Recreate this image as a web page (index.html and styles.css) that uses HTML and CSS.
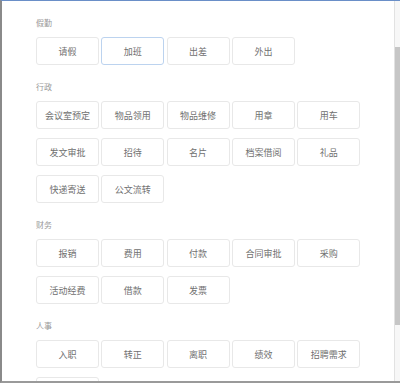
FILE: index.html
```html
<!DOCTYPE html>
<html lang="zh-CN">
<head>
    <meta charset="UTF-8">
    <meta name="viewport" content="width=device-width, initial-scale=1.0">
    <title>审批</title>
    <link rel="stylesheet" href="styles.css">
</head>
<body>
    <div class="frame">
        <div class="content">
            <div class="section">
                <div class="section-title">假勤</div>
                <div class="grid">
                    <div class="item">请假</div>
                    <div class="item active">加班</div>
                    <div class="item">出差</div>
                    <div class="item">外出</div>
                </div>
            </div>

            <div class="section">
                <div class="section-title">行政</div>
                <div class="grid">
                    <div class="item">会议室预定</div>
                    <div class="item">物品领用</div>
                    <div class="item">物品维修</div>
                    <div class="item">用章</div>
                    <div class="item">用车</div>
                    <div class="item">发文审批</div>
                    <div class="item">招待</div>
                    <div class="item">名片</div>
                    <div class="item">档案借阅</div>
                    <div class="item">礼品</div>
                    <div class="item">快递寄送</div>
                    <div class="item">公文流转</div>
                </div>
            </div>

            <div class="section">
                <div class="section-title">财务</div>
                <div class="grid">
                    <div class="item">报销</div>
                    <div class="item">费用</div>
                    <div class="item">付款</div>
                    <div class="item">合同审批</div>
                    <div class="item">采购</div>
                    <div class="item">活动经费</div>
                    <div class="item">借款</div>
                    <div class="item">发票</div>
                </div>
            </div>

            <div class="section">
                <div class="section-title">人事</div>
                <div class="grid">
                    <div class="item">入职</div>
                    <div class="item">转正</div>
                    <div class="item">离职</div>
                    <div class="item">绩效</div>
                    <div class="item">招聘需求</div>
                    <div class="item"></div>
                </div>
            </div>
        </div>

        <div class="scrollbar">
            <div class="thumb"></div>
        </div>
    </div>
</body>
</html>
```

FILE: styles.css
```css
:root {
    --border: #e8e8e8;
    --text: #707070;
    --title: #9a9a9a;
    --active: #bcd3ef;
}

body {
    margin: 0;
    font-family: "Noto Sans CJK SC", "Noto Sans", sans-serif;
    background-color: #fff;
}

.frame {
    width: 400px;
    height: 383px;
    box-sizing: border-box;
    border-top: 1px solid #6a8fc8;
    border-left: 2px solid #8a8a8a;
    border-bottom: 2px solid #9a9a9a;
    display: flex;
    overflow: hidden;
}

.content {
    flex: 1;
    padding: 14px 0 0 34px;
    overflow: hidden;
}

.section {
    margin-bottom: 14px;
}

.section-title {
    font-size: 8px;
    line-height: 16px;
    color: var(--title);
    margin-bottom: 6px;
}

.grid {
    display: grid;
    grid-template-columns: repeat(5, 63px);
    grid-auto-rows: 28px;
    column-gap: 2.3px;
    row-gap: 9px;
}

.item {
    box-sizing: border-box;
    border: 1px solid var(--border);
    border-radius: 3px;
    display: flex;
    align-items: center;
    justify-content: center;
    font-size: 9px;
    color: var(--text);
    background-color: #fff;
}

.item.active {
    border-color: var(--active);
}

.scrollbar {
    width: 5px;
    background-color: #f7f7f7;
    border-left: 1px solid #e2e2e2;
}

.thumb {
    margin-top: 46px;
    height: 278px;
    background-color: #c6c6c6;
}
```
